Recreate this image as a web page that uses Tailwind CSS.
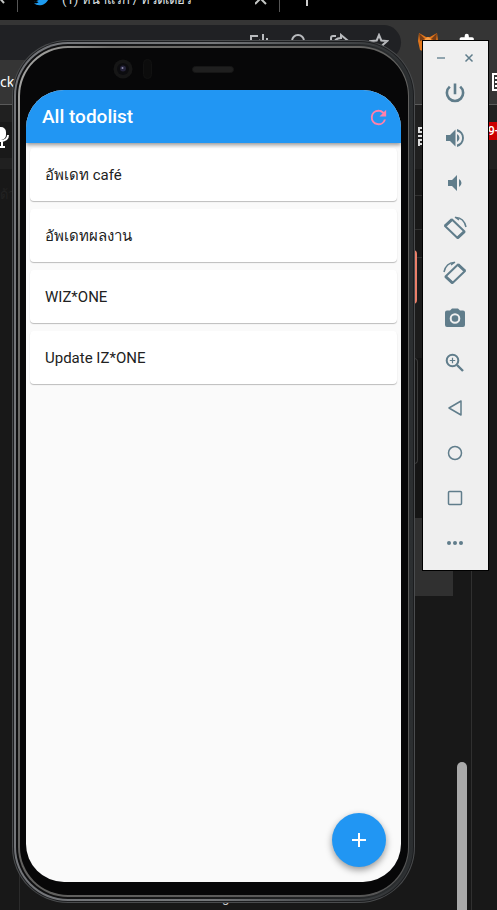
<!DOCTYPE html>
<html lang="th">
<head>
<meta charset="utf-8">
<meta name="viewport" content="width=device-width, initial-scale=1">
<title>All todolist</title>
<script src="https://cdn.jsdelivr.net/npm/@tailwindcss/browser@4"></script>
</head>
<body class="bg-[#181818] font-[Roboto,'Noto_Sans',sans-serif]">
<div class="relative h-screen overflow-hidden">

  <!-- Browser behind the emulator -->
  <div class="flex h-full flex-col text-white">
    <div class="flex h-5 items-start overflow-hidden bg-black text-[#c4c7c5]">
      <svg class="h-3 w-[17px] shrink-0" viewBox="0 0 17 12" fill="none" stroke="currentColor" stroke-width="2"><path d="M-4-6 4 3"/></svg>
      <span class="h-3 w-px shrink-0 bg-[#555]"></span>
      <svg class="ml-4 h-[6px] w-4 shrink-0" viewBox="0 0 24 9" preserveAspectRatio="none" fill="#1d9bf0"><path d="M0 2C3 3 5 2 7 1 4 1 3-1 2-3H22C21 3 15 8 8 8 5 8 2 7 0 5 3 5 5 5 7 3 4 3 2 1 0 2Z"/></svg>
      <span class="-mt-3 ml-3 w-[193px] shrink-0 whitespace-nowrap text-[13px] leading-6 text-[#dfe1e5]">(1) หน้าแรก / ทวิตเตอร์</span>
      <svg class="h-3 w-6 shrink-0" viewBox="0 0 24 12" fill="none" stroke="currentColor" stroke-width="2"><path d="m0 4 11-11M11 4 0-7"/></svg>
      <span class="h-3 w-px shrink-0 bg-[#555]"></span>
      <span class="ml-[26px] h-[6px] w-0.5 shrink-0 bg-[#ccc]"></span>
    </div>
    <div class="flex h-[85px] flex-col border-b border-[#5a5a5a] bg-[#353535] pt-[5px]">
      <div class="flex items-start">
        <div class="flex h-[35px] min-w-0 flex-1 justify-end gap-5 rounded-r-full bg-[#202124] pr-3 pt-2 text-[#b8babd]">
          <svg class="size-5" viewBox="0 0 20 20" fill="none" stroke="currentColor" stroke-width="2"><path d="M9 3H2v11M14 1v10M10 7l4 4 4-4M18 5v8"/></svg>
          <svg class="size-5" viewBox="0 0 20 20" fill="none" stroke="currentColor" stroke-width="2"><circle cx="9" cy="8" r="6"/><path d="m13 13 5 5"/></svg>
          <svg class="size-5" viewBox="0 0 20 20" fill="none" stroke="currentColor" stroke-width="2"><path d="M7 3H4a2 2 0 0 0-2 2v12h14v-4M5 12c0-4 2-7 7-7V2l6 5-6 5V9c-3 0-5 1-7 3Z"/></svg>
          <svg class="size-5" viewBox="0 0 20 20" fill="none" stroke="currentColor" stroke-width="2"><path d="m10 2 2.300 5.500 6 .5-4.600 3.900 1.400 5.800L10 14.600l-5.100 3.100 1.400-5.800L1.700 8l6-.5Z"/></svg>
        </div>
        <div class="flex w-24 shrink-0 gap-5 pl-[17px] pt-2">
          <svg class="size-5" viewBox="0 0 20 20"><path fill="#e2761b" d="m1 0 7 4h4l7-4 1 8-2 9-5 2H7l-5-2-2-9Z"/><path fill="#763d16" d="m1 0 6 6-5 2ZM19 0l-6 6 5 2Z"/><path fill="#f6a04a" d="m7 6 1 9 2 3 2-3 1-9-3-2Z"/></svg>
          <svg class="size-5" viewBox="0 0 24 24" fill="#fff"><path d="M20.500 11H19V7c0-1.100-.9-2-2-2h-4V3.500a2.500 2.500 0 0 0-5 0V5H4c-1.100 0-2 .9-2 2v3.800h1.500a2.700 2.700 0 0 1 0 5.400H2V20c0 1.100.9 2 2 2h13c1.100 0 2-.9 2-2v-4h1.500a2.500 2.500 0 0 0 0-5Z"/></svg>
        </div>
      </div>
      <div class="flex flex-1 items-center justify-between">
        <span class="font-['Noto_Sans',sans-serif] text-[14px] leading-5">ck</span>
        <svg class="h-[18px] w-[5px] shrink-0" viewBox="0 0 5 18" fill="none" stroke="#fff" stroke-width="2"><path d="M5 1H1v16h4M3 5h2M3 9h2M3 13h2"/></svg>
      </div>
    </div>
    <div class="flex h-16 justify-between bg-[#202020] pt-[17px]">
      <div class="flex h-9 w-[30px] items-start bg-[#191919] pt-[5px]">
        <svg class="h-[22px] w-[10px]" viewBox="0 0 10 22" fill="none" stroke="#fff" stroke-width="2"><path d="M0 14c5 0 8-2 8-6M2 14v7M-3 20h8"/><rect x="-3" y="1" width="8" height="11" rx="4" fill="#fff"/></svg>
      </div>
      <div class="flex h-[47px] items-start">
        <svg class="mr-[62px] mt-[5px] h-[19px] w-2" viewBox="0 0 8 19" fill="none" stroke="#ddd" stroke-width="2"><path d="M2 1h8M2 5h8M2 9h8M2 13h8M2 17h8M1 0v6M1 8v2M1 12v7"/></svg>
        <span class="h-[18px] w-[9px] overflow-hidden whitespace-nowrap bg-[#cc0000] text-[12px] font-medium leading-[18px]">9+</span>
      </div>
    </div>
    <div class="flex min-h-0 flex-1 justify-between bg-[#181818]">
      <div class="flex w-5 flex-col justify-between border-r border-[#2b2b2b]">
        <span class="pt-4 text-[13px] text-[#222]">ด้ว</span>
      </div>
      <div class="flex w-[105px] shrink-0">
        <div class="flex w-[61px] flex-col">
          <div class="h-[27px] border-b border-[#303030]"></div>
          <div class="h-[34px] border-b border-[#303030]"></div>
          <div class="h-[28px] border-b border-[#303030]"></div>
          <div class="h-[100px] bg-[#1c1c1c]"></div>
          <div class="h-[160px] bg-[#151515]"></div>
          <div class="h-[78px] bg-[#303030]"></div>
        </div>
        <div class="flex w-[19px] items-end justify-center border-r border-[#303030]">
          <div class="h-[148px] w-[10px] rounded-t-full bg-[#a9a9a9]"></div>
        </div>
      </div>
    </div>
  </div>
  <span class="absolute bottom-1 left-[222px] text-[13px] leading-4 text-[#ccc]">g</span>

  <!-- Phone side keys -->
  <div class="absolute right-20 top-[250px] h-[54px] w-1 rounded-r-sm bg-[#ec7f69]"></div>
  <div class="absolute right-[79px] top-[358px] h-[106px] w-1 rounded-r-sm border border-[#3a3a3a] bg-[#151515]"></div>

  <!-- Phone -->
  <div class="absolute bottom-[7px] left-3 right-[82px] top-[40px] rounded-[56px] bg-[#4a4c4e] p-px">
   <div class="h-full rounded-[55px] bg-[#1c1d1f] p-px">
    <div class="h-full rounded-[54px] bg-linear-to-r from-[#737579] via-[#75777a] to-[#2b2e30] p-0.5">
     <div class="h-full rounded-[52px] bg-linear-to-r from-[#0e0e0f] via-[#1a1b1c] to-[#2b2e30] p-0.5">
      <div class="h-full rounded-[50px] bg-linear-to-br from-[#a5a5a3] from-2% via-[#6c6b68] via-12% to-[#555] pb-0.5 pl-0.5 pr-px pt-0.5">
       <div class="flex h-full flex-col rounded-[48px] bg-[#070708] pb-[13px] pl-[6px] pr-[7px]">
        <div class="flex h-[42px] shrink-0 items-center pl-[87px]">
          <svg class="size-5" viewBox="0 0 20 20"><circle cx="10" cy="10" r="9.500" fill="#161616"/><circle cx="10" cy="10" r="6" fill="#0c0c0f"/><circle cx="10" cy="9.500" r="3" fill="#25233a"/><circle cx="9.500" cy="9" r="1" fill="#8d8aaa"/></svg>
          <span class="ml-[10px] h-5 w-[9px] rounded-full border border-[#111] bg-[#0c0c0c]"></span>
          <span class="ml-[40px] h-[7px] w-[42px] rounded-full border border-[#161616] bg-[#1f1f1f]"></span>
        </div>
        <main class="relative flex min-h-0 flex-1 flex-col overflow-hidden rounded-[38px] bg-[#fafafa]">
          <header class="z-10 flex h-[53px] shrink-0 items-center justify-between bg-[#2196f3] pl-4 pr-[11px] pt-px shadow-[0_2px_4px_rgba(0,0,0,0.4)]">
            <h1 class="text-[19px] font-medium leading-6 text-white">All todolist</h1>
            <button type="button" aria-label="Refresh" class="text-[#ff80ab]">
              <svg class="size-[23px]" viewBox="0 0 24 24" fill="currentColor"><path d="M17.650 6.350A7.960 7.960 0 0 0 12 4a8 8 0 1 0 7.730 10h-2.080A6 6 0 1 1 12 6c1.660 0 3.140.69 4.220 1.780L13 11h7V4z"/></svg>
            </button>
          </header>
          <ul class="flex flex-col gap-2 px-1 pt-[5px] text-[15px] leading-5 text-[#212121]">
            <li class="flex h-[53px] items-center rounded-[4px] bg-white px-[15px] shadow-[0_1px_1px_rgba(0,0,0,0.25)]">อัพเดท café</li>
            <li class="flex h-[53px] items-center rounded-[4px] bg-white px-[15px] shadow-[0_1px_1px_rgba(0,0,0,0.25)]">อัพเดทผลงาน</li>
            <li class="flex h-[53px] items-center rounded-[4px] bg-white px-[15px] shadow-[0_1px_1px_rgba(0,0,0,0.25)]">WIZ*ONE</li>
            <li class="flex h-[53px] items-center rounded-[4px] bg-white px-[15px] shadow-[0_1px_1px_rgba(0,0,0,0.25)]">Update IZ*ONE</li>
          </ul>
          <button type="button" aria-label="Add" class="absolute bottom-[15px] right-[15px] flex size-[54px] items-center justify-center rounded-full bg-[#2196f3] text-white shadow-[0_3px_7px_rgba(0,0,0,0.4)]">
            <svg class="size-6" viewBox="0 0 24 24" fill="currentColor"><path d="M19 13h-6v6h-2v-6H5v-2h6V5h2v6h6z"/></svg>
          </button>
        </main>
       </div>
      </div>
     </div>
    </div>
   </div>
  </div>

  <!-- Emulator controls -->
  <aside class="absolute right-2 top-10 flex w-[67px] flex-col border border-black bg-[#efefef] pb-[5px] pr-px text-[#607d8b]">
    <div class="flex h-[29px] items-center justify-center gap-4 pt-1">
      <button type="button" aria-label="Minimize"><svg class="size-3" viewBox="0 0 12 12" stroke="#90a4ae" stroke-width="2"><path d="M2 6h8"/></svg></button>
      <button type="button" aria-label="Close"><svg class="size-3" viewBox="0 0 12 12" stroke="currentColor" stroke-width="1.500"><path d="m2.500 2.500 7 7M9.500 2.500l-7 7"/></svg></button>
    </div>
    <button type="button" aria-label="Power" class="flex h-[45px] items-center justify-center"><svg class="size-6" viewBox="0 0 24 24" fill="currentColor"><path d="M13.300 2.500h-2.600v10.700h2.600zM18.100 4.800l-1.800 1.800A6.800 6.800 0 1 1 7.700 6.600L5.900 4.800a9.400 9.400 0 1 0 12.200 0z"/></svg></button>
    <button type="button" aria-label="Volume up" class="flex h-[45px] items-center justify-center"><svg class="size-6" viewBox="0 0 24 24" fill="currentColor"><path d="M3 9v6h4l5.500 5.500v-17L7 9zm13.500 3A4.500 4.500 0 0 0 14 7.970v8.050A4.500 4.500 0 0 0 16.500 12M14 3v2.500a6.700 6.700 0 0 1 0 13V21a9.300 9.300 0 0 0 0-18"/></svg></button>
    <button type="button" aria-label="Volume down" class="flex h-[45px] items-center justify-center"><svg class="size-6" viewBox="0 0 24 24" fill="currentColor"><path d="M18.500 12A4.500 4.500 0 0 0 16 7.970v8.050A4.500 4.500 0 0 0 18.500 12M5 9v6h4l5 5V4L9 9z"/></svg></button>
    <button type="button" aria-label="Rotate left" class="flex h-[45px] items-center justify-center"><svg class="size-6" viewBox="0 0 24 24" fill="none" stroke="currentColor" stroke-width="2"><path stroke-width="3" stroke-linejoin="round" d="M9 3.500 2 10M14.500 22l7-6.500"/><path d="m9 3.500 12.500 12-7 6.500L2 10Z" stroke-linejoin="round"/><path stroke-width="1.500" d="M12 1.500c6-.5 10 4 11 9.500M12 1l4 3"/></svg></button>
    <button type="button" aria-label="Rotate right" class="flex h-[45px] items-center justify-center"><svg class="size-6" viewBox="0 0 24 24" fill="none" stroke="currentColor" stroke-width="2"><path stroke-width="3" stroke-linejoin="round" d="m15 3.500 7 6.500M9.500 22l-7-6.500"/><path d="m15 3.500-12.500 12 7 6.500L22 10Z" stroke-linejoin="round"/><path stroke-width="1.500" d="M12 1.500C6 1 2 5.500 1 11M12 1 8 4"/></svg></button>
    <button type="button" aria-label="Take screenshot" class="flex h-[45px] items-center justify-center"><svg class="size-6" viewBox="0 0 24 24" fill="currentColor" fill-rule="evenodd"><path d="M9 2.500 7 4.500H4a2 2 0 0 0-2 2v12.500a2 2 0 0 0 2 2h16a2 2 0 0 0 2-2V6.500a2 2 0 0 0-2-2h-3l-2-2zM12 7.200a5.300 5.300 0 1 1 0 10.600 5.300 5.300 0 0 1 0-10.600m0 2a3.300 3.300 0 1 0 0 6.600 3.300 3.300 0 0 0 0-6.600"/></svg></button>
    <button type="button" aria-label="Zoom" class="flex h-[45px] items-center justify-center"><svg class="size-6" viewBox="0 0 24 24" fill="none" stroke="currentColor" stroke-width="2"><circle cx="9.500" cy="9.500" r="5.800"/><path d="m14 14 6 6" stroke-width="2.400"/><path stroke-width="1.200" d="M9.500 6.800v5.400M6.800 9.500h5.400"/></svg></button>
    <button type="button" aria-label="Back" class="flex h-[45px] items-center justify-center"><svg class="size-6" viewBox="0 0 24 24" fill="none" stroke="currentColor" stroke-width="1.500" stroke-linejoin="round"><path d="M18 5v14L6 12Z"/></svg></button>
    <button type="button" aria-label="Home" class="flex h-[45px] items-center justify-center"><svg class="size-6" viewBox="0 0 24 24" fill="none" stroke="currentColor" stroke-width="1.500"><circle cx="12" cy="12" r="6.500"/></svg></button>
    <button type="button" aria-label="Overview" class="flex h-[45px] items-center justify-center"><svg class="size-6" viewBox="0 0 24 24" fill="none" stroke="currentColor" stroke-width="1.500"><rect x="5.500" y="5.500" width="13" height="13" rx="1"/></svg></button>
    <button type="button" aria-label="More" class="flex h-[45px] items-center justify-center"><svg class="size-6" viewBox="0 0 24 24" fill="currentColor"><circle cx="6" cy="12" r="2"/><circle cx="12" cy="12" r="2"/><circle cx="18" cy="12" r="2"/></svg></button>
  </aside>
</div>
</body>
</html>
